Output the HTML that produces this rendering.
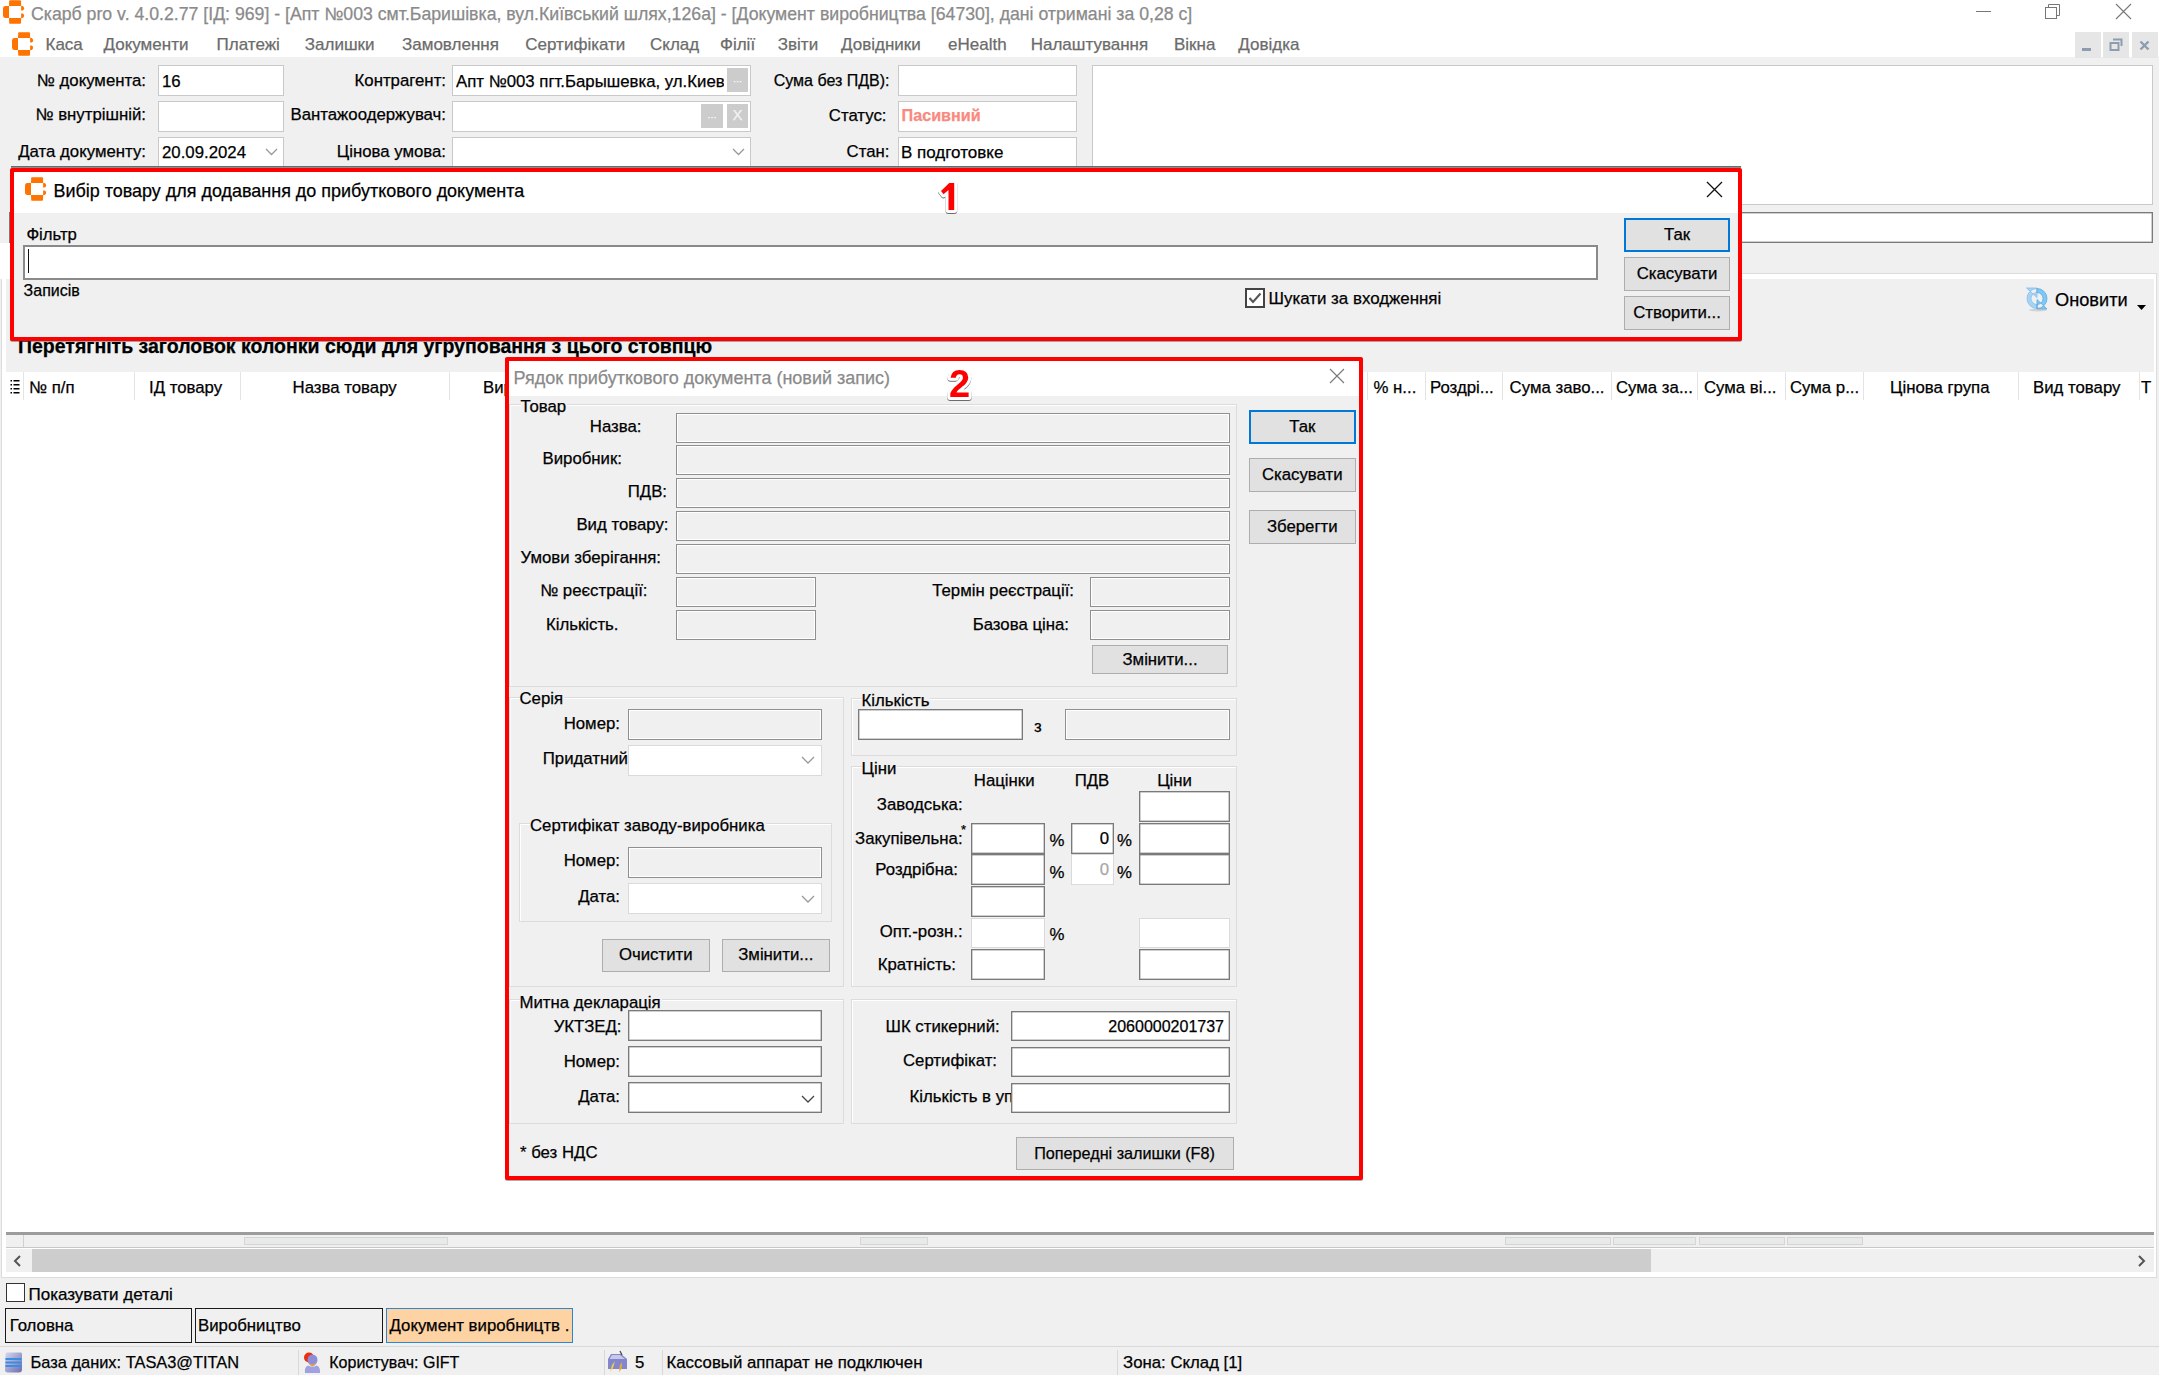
<!DOCTYPE html><html><head><meta charset="utf-8"><style>
*{margin:0;padding:0}
html,body{width:2159px;height:1375px;overflow:hidden;background:#f0f0f0;font-family:"Liberation Sans",sans-serif;color:#000}
.t{position:absolute;white-space:nowrap;line-height:1;-webkit-text-stroke:0.25px currentColor}
.b{position:absolute}
.ab{position:absolute;overflow:visible}
</style></head><body>
<div class="b" style="left:0px;top:0px;width:2159px;height:28px;background:#fff;"></div>
<svg class="ab" style="left:3.3px;top:-0.3px" width="21.0" height="24.0" viewBox="0 0 21 24"><g fill="#ff7300"><path d="M6.8 0.3 H17.2 Q17.9 0.3 18 1.2 L18.2 5.9 H6 L6.2 1.2 Q6.3 0.3 6.8 0.3 Z"/><path d="M6 6 V17.9 H2 Q0 17.8 0 15.5 V8.4 Q0 6.1 2 6 Z"/><path d="M6 18 H18.2 L18 22.8 Q17.9 23.8 17.2 23.8 H6.8 Q6.3 23.8 6.2 22.8 Z"/><path d="M18.1 6 H19.5 Q21.1 6.2 21.1 8.2 Q21.1 10.4 19.3 10.5 H18.1 Z"/><path d="M18.1 13.5 H19.3 Q21.1 13.6 21.1 15.8 Q21.1 17.8 19.5 17.9 H18.1 Z"/></g></svg>
<div class="t" style="top:6.0px;font-size:17.7px;left:31px;color:#8a8a8a;">Скарб pro v. 4.0.2.77 [ІД: 969] - [Апт №003 смт.Баришівка, вул.Київський шлях,126а] - [Документ виробництва [64730], дані отримані за 0,28 с]</div>
<div class="b" style="left:1976px;top:11px;width:15px;height:1px;background:#777;"></div>
<svg class="ab" style="left:2044px;top:3px" width="18" height="18"><rect x="1.5" y="4.5" width="11" height="11" fill="none" stroke="#777" stroke-width="1"/><path d="M4.5 4.5 V1.5 H15.5 V12.5 H12.5" fill="none" stroke="#777" stroke-width="1"/></svg>
<svg class="ab" style="left:2115px;top:3px" width="18" height="18"><path d="M1 1 L16 16 M16 1 L1 16" stroke="#777" stroke-width="1.1"/></svg>
<div class="b" style="left:0px;top:28px;width:2159px;height:29px;background:#fff;"></div>
<svg class="ab" style="left:12px;top:31.5px" width="21.0" height="24.0" viewBox="0 0 21 24"><g fill="#ff7300"><path d="M6.8 0.3 H17.2 Q17.9 0.3 18 1.2 L18.2 5.9 H6 L6.2 1.2 Q6.3 0.3 6.8 0.3 Z"/><path d="M6 6 V17.9 H2 Q0 17.8 0 15.5 V8.4 Q0 6.1 2 6 Z"/><path d="M6 18 H18.2 L18 22.8 Q17.9 23.8 17.2 23.8 H6.8 Q6.3 23.8 6.2 22.8 Z"/><path d="M18.1 6 H19.5 Q21.1 6.2 21.1 8.2 Q21.1 10.4 19.3 10.5 H18.1 Z"/><path d="M18.1 13.5 H19.3 Q21.1 13.6 21.1 15.8 Q21.1 17.8 19.5 17.9 H18.1 Z"/></g></svg>
<div class="t" style="top:36.0px;font-size:17.0px;left:45.5px;color:#6b6b6b;">Каса</div>
<div class="t" style="top:36.0px;font-size:17.0px;left:103.5px;color:#6b6b6b;">Документи</div>
<div class="t" style="top:36.0px;font-size:17.0px;left:216.6px;color:#6b6b6b;">Платежі</div>
<div class="t" style="top:36.0px;font-size:17.0px;left:304.8px;color:#6b6b6b;">Залишки</div>
<div class="t" style="top:36.0px;font-size:17.0px;left:402px;color:#6b6b6b;">Замовлення</div>
<div class="t" style="top:36.0px;font-size:17.0px;left:525.3px;color:#6b6b6b;">Сертифікати</div>
<div class="t" style="top:36.0px;font-size:17.0px;left:650px;color:#6b6b6b;">Склад</div>
<div class="t" style="top:36.0px;font-size:17.0px;left:720px;color:#6b6b6b;">Філії</div>
<div class="t" style="top:36.0px;font-size:17.0px;left:777.8px;color:#6b6b6b;">Звіти</div>
<div class="t" style="top:36.0px;font-size:17.0px;left:841px;color:#6b6b6b;">Довідники</div>
<div class="t" style="top:36.0px;font-size:17.0px;left:948px;color:#6b6b6b;">eHealth</div>
<div class="t" style="top:36.0px;font-size:17.0px;left:1030.7px;color:#6b6b6b;">Налаштування</div>
<div class="t" style="top:36.0px;font-size:17.0px;left:1174px;color:#6b6b6b;">Вікна</div>
<div class="t" style="top:36.0px;font-size:17.0px;left:1238.3px;color:#6b6b6b;">Довідка</div>
<div class="b" style="left:2075px;top:32px;width:26px;height:26px;background:#e6e6e6;"></div>
<div class="b" style="left:2103px;top:32px;width:26px;height:26px;background:#e6e6e6;"></div>
<div class="b" style="left:2132px;top:32px;width:26px;height:26px;background:#e6e6e6;"></div>
<div class="b" style="left:2082px;top:48px;width:9px;height:3px;background:#8c9db0;"></div>
<svg class="ab" style="left:2109px;top:38px" width="14" height="14"><path d="M4 1.5 H12.5 V8" fill="none" stroke="#8c9db0" stroke-width="2"/><rect x="1.5" y="5" width="8" height="7" fill="none" stroke="#8c9db0" stroke-width="2"/></svg>
<svg class="ab" style="left:2139px;top:40px" width="12" height="12"><path d="M1.5 1.5 L9.5 9.5 M9.5 1.5 L1.5 9.5" stroke="#8c9db0" stroke-width="2.4"/></svg>
<div class="t" style="top:73.0px;font-size:16.8px;right:2013px;">№ документа:</div>
<div class="t" style="top:107.0px;font-size:16.8px;right:2013px;">№ внутрішній:</div>
<div class="t" style="top:144.0px;font-size:16.8px;right:2013px;">Дата документу:</div>
<div class="b" style="left:158px;top:65px;width:126px;height:31px;background:#fff;border:1px solid #c9c9c9;box-sizing:border-box;"></div>
<div class="t" style="top:74.0px;font-size:16.8px;left:162px;">16</div>
<div class="b" style="left:158px;top:101px;width:126px;height:31px;background:#fff;border:1px solid #c9c9c9;box-sizing:border-box;"></div>
<div class="b" style="left:158px;top:137px;width:126px;height:31px;background:#fff;border:1px solid #c9c9c9;box-sizing:border-box;"></div>
<div class="t" style="top:145.0px;font-size:16.8px;left:162px;">20.09.2024</div>
<svg class="ab" style="left:264.5px;top:148.25px" width="13" height="7.5"><path d="M1 1 L6.5 6.5 L12 1" fill="none" stroke="#999" stroke-width="1.3"/></svg>
<div class="t" style="top:73.0px;font-size:16.8px;right:1713px;">Контрагент:</div>
<div class="t" style="top:107.0px;font-size:16.8px;right:1713px;">Вантажоодержувач:</div>
<div class="t" style="top:144.0px;font-size:16.8px;right:1713px;">Цінова умова:</div>
<div class="b" style="left:452px;top:65px;width:299px;height:31px;background:#fff;border:1px solid #c9c9c9;box-sizing:border-box;"></div>
<div class="t" style="top:74.0px;font-size:16.8px;left:456px;width:268px;overflow:hidden;">Апт №003 пгт.Барышевка, ул.Киев</div>
<div class="b" style="left:727px;top:68px;width:21px;height:24px;background:#cccccc;"></div>
<div class="t" style="top:77.0px;font-size:9px;left:737.5px;transform:translateX(-50%);color:#fff;">···</div>
<div class="b" style="left:452px;top:101px;width:299px;height:31px;background:#fff;border:1px solid #c9c9c9;box-sizing:border-box;"></div>
<div class="b" style="left:701px;top:104px;width:22px;height:24px;background:#cccccc;"></div>
<div class="t" style="top:113.0px;font-size:9px;left:712px;transform:translateX(-50%);color:#fff;">···</div>
<div class="b" style="left:727px;top:104px;width:21px;height:24px;background:#cccccc;"></div>
<div class="t" style="top:107.0px;font-size:15px;left:737.5px;transform:translateX(-50%);color:#f4f4f4;">X</div>
<div class="b" style="left:452px;top:137px;width:299px;height:31px;background:#fff;border:1px solid #c9c9c9;box-sizing:border-box;"></div>
<svg class="ab" style="left:731.5px;top:148.25px" width="13" height="7.5"><path d="M1 1 L6.5 6.5 L12 1" fill="none" stroke="#999" stroke-width="1.3"/></svg>
<div class="t" style="top:73.0px;font-size:16.0px;right:1269.5px;">Сума без ПДВ):</div>
<div class="t" style="top:108.0px;font-size:16.8px;right:1272.5px;">Статус:</div>
<div class="t" style="top:144.0px;font-size:16.8px;right:1269.5px;">Стан:</div>
<div class="b" style="left:898px;top:65px;width:179px;height:31px;background:#fff;border:1px solid #c9c9c9;box-sizing:border-box;"></div>
<div class="b" style="left:898px;top:101px;width:179px;height:31px;background:#fff;border:1px solid #c9c9c9;box-sizing:border-box;"></div>
<div class="t" style="top:107.0px;font-size:16.2px;left:901.5px;color:#f88a80;font-weight:bold;">Пасивний</div>
<div class="b" style="left:898px;top:137px;width:179px;height:31px;background:#fff;border:1px solid #c9c9c9;box-sizing:border-box;"></div>
<div class="t" style="top:144.0px;font-size:17px;left:901px;">В подготовке</div>
<div class="b" style="left:1092px;top:65px;width:1061px;height:140px;background:#fff;border:1px solid #c9c9c9;box-sizing:border-box;"></div>
<div class="b" style="left:9px;top:212px;width:2144px;height:31px;background:#fff;border:1px solid #7a7a7a;box-sizing:border-box;box-shadow:inset 0 0 0 0.5px #a0a0a0;"></div>
<div class="b" style="left:1px;top:273px;width:2156px;height:1005px;background:#fff;border:1px solid #dcdcdc;box-sizing:border-box;"></div>
<div class="b" style="left:0px;top:243px;width:10px;height:36px;background:#fff;"></div>
<div class="b" style="left:6px;top:279px;width:2148px;height:93px;background:#f0f0f0;"></div>
<svg class="ab" style="left:2020px;top:282px" width="34" height="34" viewBox="0 0 34 34"><ellipse cx="18" cy="28" rx="9" ry="1.5" fill="rgba(0,0,0,0.12)"/><path d="M17 6.5 A10 10 0 0 0 17 26.5 V22.5 A6 6 0 0 1 17 10.5 Z M6.5 6 H17 V15.5 Z" fill="#a6d4f6" stroke="#86bdea" stroke-width="0.8"/><path d="M17 6.5 A10 10 0 0 1 17 26.5 V22.5 A6 6 0 0 0 17 10.5 Z M17 17.5 V27 H27 Z" fill="#7cc8f6" stroke="#5fa8e0" stroke-width="0.8"/></svg>
<div class="t" style="top:291.0px;font-size:18.2px;left:2055px;">Оновити</div>
<svg class="ab" style="left:2137px;top:305px" width="10" height="6"><path d="M0 0 H9 L4.5 5 Z" fill="#000"/></svg>
<div class="t" style="top:337.0px;font-size:19.5px;left:18px;font-weight:bold;">Перетягніть заголовок колонки сюди для угруповання з цього стовпцю</div>
<div class="b" style="left:6px;top:372px;width:2148px;height:28px;background:#fff;"></div>
<svg class="ab" style="left:10px;top:379px" width="10" height="15"><g fill="#000"><rect x="0.5" y="1" width="1.5" height="1.5"/><rect x="3.5" y="1" width="6" height="1.5"/><rect x="0.5" y="5" width="1.5" height="1.5"/><rect x="3.5" y="5" width="6" height="1.5"/><rect x="0.5" y="9" width="1.5" height="1.5"/><rect x="3.5" y="9" width="6" height="1.5"/><rect x="0.5" y="13" width="1.5" height="1.5"/><rect x="3.5" y="13" width="6" height="1.5"/></g></svg>
<div class="b" style="left:23px;top:372px;width:1px;height:28px;background:#e4e4e4;"></div>
<div class="b" style="left:134px;top:372px;width:1px;height:28px;background:#e4e4e4;"></div>
<div class="b" style="left:240px;top:372px;width:1px;height:28px;background:#e4e4e4;"></div>
<div class="b" style="left:448.5px;top:372px;width:1.0px;height:28px;background:#e4e4e4;"></div>
<div class="b" style="left:1367.4px;top:372px;width:1.0px;height:28px;background:#e4e4e4;"></div>
<div class="b" style="left:1425px;top:372px;width:1px;height:28px;background:#e4e4e4;"></div>
<div class="b" style="left:1501.7px;top:372px;width:1.0px;height:28px;background:#e4e4e4;"></div>
<div class="b" style="left:1611px;top:372px;width:1px;height:28px;background:#e4e4e4;"></div>
<div class="b" style="left:1696.7px;top:372px;width:1.0px;height:28px;background:#e4e4e4;"></div>
<div class="b" style="left:1784.7px;top:372px;width:1.0px;height:28px;background:#e4e4e4;"></div>
<div class="b" style="left:1863px;top:372px;width:1px;height:28px;background:#e4e4e4;"></div>
<div class="b" style="left:2018px;top:372px;width:1px;height:28px;background:#e4e4e4;"></div>
<div class="b" style="left:2139.4px;top:372px;width:1.0px;height:28px;background:#e4e4e4;"></div>
<div class="t" style="top:380.0px;font-size:16.8px;left:29px;">№ п/п</div>
<div class="t" style="top:380.0px;font-size:16.8px;left:149px;">ІД товару</div>
<div class="t" style="top:380.0px;font-size:16.8px;left:292.6px;">Назва товару</div>
<div class="t" style="top:380.0px;font-size:16.8px;left:483px;">Вир</div>
<div class="t" style="top:380.0px;font-size:16.8px;left:1373.5px;">% н...</div>
<div class="t" style="top:380.0px;font-size:16.8px;left:1430px;">Роздрі...</div>
<div class="t" style="top:380.0px;font-size:16.8px;left:1509.6px;">Сума заво...</div>
<div class="t" style="top:380.0px;font-size:16.8px;left:1616px;">Сума за...</div>
<div class="t" style="top:380.0px;font-size:16.8px;left:1704px;">Сума ві...</div>
<div class="t" style="top:380.0px;font-size:16.8px;left:1790px;">Сума р...</div>
<div class="t" style="top:380.0px;font-size:16.8px;left:1890px;">Цінова група</div>
<div class="t" style="top:380.0px;font-size:16.8px;left:2033px;">Вид товару</div>
<div class="t" style="top:380.0px;font-size:16.8px;left:2141px;">Т</div>
<div class="b" style="left:6px;top:1232px;width:2148px;height:3px;background:#9c9c9c;"></div>
<div class="b" style="left:6px;top:1235px;width:2148px;height:12px;background:#f0f0f0;"></div>
<div class="b" style="left:6px;top:1247px;width:2148px;height:1px;background:#c8c8c8;"></div>
<div class="b" style="left:23px;top:1235px;width:1px;height:12px;background:#d0d0d0;"></div>
<div class="b" style="left:244px;top:1237px;width:204px;height:8px;background:#e8eaea;border:1px solid #d4d6d6;box-sizing:border-box;"></div>
<div class="b" style="left:860px;top:1237px;width:68px;height:8px;background:#e8eaea;border:1px solid #d4d6d6;box-sizing:border-box;"></div>
<div class="b" style="left:1505px;top:1237px;width:106px;height:8px;background:#e8eaea;border:1px solid #d4d6d6;box-sizing:border-box;"></div>
<div class="b" style="left:1613px;top:1237px;width:83px;height:8px;background:#e8eaea;border:1px solid #d4d6d6;box-sizing:border-box;"></div>
<div class="b" style="left:1699px;top:1237px;width:86px;height:8px;background:#e8eaea;border:1px solid #d4d6d6;box-sizing:border-box;"></div>
<div class="b" style="left:1787px;top:1237px;width:76px;height:8px;background:#e8eaea;border:1px solid #d4d6d6;box-sizing:border-box;"></div>
<div class="b" style="left:6px;top:1249px;width:2148px;height:23px;background:#f0f0f0;"></div>
<div class="b" style="left:32px;top:1249px;width:1619px;height:23px;background:#cdcdcd;"></div>
<svg class="ab" style="left:13px;top:1255px" width="10" height="12"><path d="M7 1 L2 6 L7 11" fill="none" stroke="#555" stroke-width="2"/></svg>
<svg class="ab" style="left:2136px;top:1255px" width="10" height="12"><path d="M3 1 L8 6 L3 11" fill="none" stroke="#555" stroke-width="2"/></svg>
<div class="b" style="left:6px;top:1283px;width:19px;height:19px;background:#fff;border:1px solid #333;box-sizing:border-box;"></div>
<div class="t" style="top:1286.0px;font-size:17px;left:28.5px;">Показувати деталі</div>
<div class="b" style="left:5px;top:1308px;width:187px;height:35px;border:1.5px solid #1a1a1a;box-sizing:border-box;"></div>
<div class="t" style="top:1318.0px;font-size:16.8px;left:9.7px;">Головна</div>
<div class="b" style="left:195px;top:1308px;width:188px;height:35px;border:1.5px solid #1a1a1a;box-sizing:border-box;"></div>
<div class="t" style="top:1318.0px;font-size:16.8px;left:198px;">Виробництво</div>
<div class="b" style="left:386px;top:1308px;width:187px;height:35px;background:#fed3a3;border:1.5px solid #2a86d8;box-sizing:border-box;"></div>
<div class="t" style="top:1318.0px;font-size:16.8px;left:389.5px;">Документ виробництв .</div>
<div class="b" style="left:0px;top:1346px;width:2159px;height:1px;background:#d8d8d8;"></div>
<div class="b" style="left:297.5px;top:1350px;width:1.0px;height:25px;background:#d8d8d8;"></div>
<div class="b" style="left:604px;top:1350px;width:1px;height:25px;background:#d8d8d8;"></div>
<div class="b" style="left:661.7px;top:1350px;width:1.0px;height:25px;background:#d8d8d8;"></div>
<div class="b" style="left:1117px;top:1350px;width:1px;height:25px;background:#d8d8d8;"></div>
<div class="t" style="top:1354.0px;font-size:16.4px;left:30.6px;">База даних: TASA3@TITAN</div>
<div class="t" style="top:1355.0px;font-size:16.0px;left:329.3px;">Користувач: GIFT</div>
<div class="t" style="top:1355.0px;font-size:16.8px;left:635px;">5</div>
<div class="t" style="top:1355.0px;font-size:16.8px;left:666.5px;">Кассовый аппарат не подключен</div>
<div class="t" style="top:1355.0px;font-size:16.8px;left:1123px;">Зона: Склад [1]</div>
<svg class="ab" style="left:4px;top:1352px" width="19" height="21" viewBox="0 0 19 21"><defs><linearGradient id="dbg" x1="0" y1="0" x2="1" y2="1"><stop offset="0" stop-color="#d8d8f0"/><stop offset="1" stop-color="#6c6cb0"/></linearGradient></defs><path d="M1.5 2 Q1.5 0.5 3 0.5 H17 Q18 0.5 18 2 V17.5 Q18 20.5 15 20.5 H4 Q1 20.5 1 18 Z" fill="url(#dbg)"/><rect x="1.5" y="6" width="16" height="2" fill="#3a8ee0"/><rect x="1.5" y="9.5" width="16" height="2" fill="#3a8ee0"/><rect x="1.5" y="13" width="16" height="2" fill="#3a8ee0"/></svg>
<svg class="ab" style="left:303px;top:1351px" width="18" height="23" viewBox="0 0 18 23"><circle cx="6" cy="6.5" r="5" fill="#e83010"/><ellipse cx="9.5" cy="9" rx="5" ry="5.5" fill="#8c8ed8"/><path d="M6 11.5 Q9.5 15 13 11.5 Q12 15 9.5 15.5 Q7 15 6 11.5 Z" fill="#e89a50"/><path d="M2 22 Q1 15.5 5.5 14.5 Q9.5 17 13.5 14.5 Q17.5 15.5 17 22 Z" fill="#a0a2e0"/></svg>
<svg class="ab" style="left:607px;top:1350px" width="21" height="23" viewBox="0 0 21 23"><path d="M1 9 L4 4 H14 L20 9 V19 H1 Z" fill="#8486cc"/><path d="M3 8 L5 5 H13 L18 9 H3 Z" fill="#c8c8ec"/><path d="M13 1 L15 5" stroke="#444" stroke-width="1.2"/><path d="M3 22 L5 15 L8 11 L6 18 Z" fill="#f0d040"/><path d="M12 22 L13 15 L15 12 L14.5 19 Z" fill="#e8b030"/></svg>
<div class="b" style="left:11px;top:166px;width:1730px;height:2px;background:linear-gradient(#555c5c,#9aa0a0);"></div>
<div class="b" style="left:10px;top:168px;width:1732px;height:173px;background:#f0f0f0;border:4px solid #ff0000;box-sizing:border-box;border-radius:2px;box-shadow:0 0.8px 0 rgba(40,60,60,0.55);"></div>
<div class="b" style="left:14px;top:172px;width:1724px;height:41px;background:#fff;"></div>
<svg class="ab" style="left:25px;top:177px" width="21.0" height="24.0" viewBox="0 0 21 24"><g fill="#ff7300"><path d="M6.8 0.3 H17.2 Q17.9 0.3 18 1.2 L18.2 5.9 H6 L6.2 1.2 Q6.3 0.3 6.8 0.3 Z"/><path d="M6 6 V17.9 H2 Q0 17.8 0 15.5 V8.4 Q0 6.1 2 6 Z"/><path d="M6 18 H18.2 L18 22.8 Q17.9 23.8 17.2 23.8 H6.8 Q6.3 23.8 6.2 22.8 Z"/><path d="M18.1 6 H19.5 Q21.1 6.2 21.1 8.2 Q21.1 10.4 19.3 10.5 H18.1 Z"/><path d="M18.1 13.5 H19.3 Q21.1 13.6 21.1 15.8 Q21.1 17.8 19.5 17.9 H18.1 Z"/></g></svg>
<div class="t" style="top:183.0px;font-size:17.97px;left:53.5px;">Вибір товару для додавання до прибуткового документа</div>
<svg class="ab" style="left:1706px;top:181px" width="18" height="18"><path d="M1 1 L16 16 M16 1 L1 16" stroke="#111" stroke-width="1.3"/></svg>
<div class="t" style="top:227.0px;font-size:16.7px;left:26.4px;">Фільтр</div>
<div class="b" style="left:23px;top:245px;width:1575px;height:35px;background:#fff;border:2px solid #8a8a8a;box-sizing:border-box;"></div>
<div class="b" style="left:27.5px;top:249px;width:1.5px;height:24px;background:#111;"></div>
<div class="t" style="top:283.0px;font-size:16.0px;left:23.6px;">Записів</div>
<div class="b" style="left:1245px;top:288px;width:20px;height:20px;background:#fff;border:2px solid #444;box-sizing:border-box;"></div>
<svg class="ab" style="left:1247px;top:290px" width="16" height="16"><path d="M2.5 8 L6 12 L13.5 3.5" fill="none" stroke="#555" stroke-width="2"/></svg>
<div class="t" style="top:291.0px;font-size:16.9px;left:1268.5px;">Шукати за входженняі</div>
<div class="b" style="left:1624px;top:218px;width:106px;height:34px;background:#e1e1e1;border:2px solid #0078d7;box-sizing:border-box;"></div>
<div class="t" style="top:227.0px;font-size:16.8px;left:1677.0px;transform:translateX(-50%);">Так</div>
<div class="b" style="left:1624px;top:257px;width:106px;height:34px;background:#e1e1e1;border:1px solid #adadad;box-sizing:border-box;"></div>
<div class="t" style="top:266.0px;font-size:16.8px;left:1677.0px;transform:translateX(-50%);">Скасувати</div>
<div class="b" style="left:1624px;top:296px;width:106px;height:34px;background:#e1e1e1;border:1px solid #adadad;box-sizing:border-box;"></div>
<div class="t" style="top:305.0px;font-size:16.8px;left:1677.0px;transform:translateX(-50%);">Створити...</div>
<div class="b" style="left:505px;top:357px;width:858px;height:823px;background:#f0f0f0;border:4px solid #ff0000;box-sizing:border-box;border-radius:2px;box-shadow:0 0.8px 0 rgba(40,60,60,0.55);"></div>
<div class="b" style="left:509px;top:361px;width:850px;height:35px;background:#fff;"></div>
<div class="t" style="top:369.0px;font-size:18.0px;left:513.5px;color:#8a8a8a;">Рядок прибуткового документа (новий запис)</div>
<svg class="ab" style="left:1329px;top:368px" width="17" height="17"><path d="M1 1 L15 15 M15 1 L1 15" stroke="#777" stroke-width="1.1"/></svg>
<div class="b" style="left:509px;top:404px;width:728px;height:283px;border:1px solid #dcdcdc;box-sizing:border-box;box-shadow:inset 1px 1px 0 #fff;"></div>
<div class="t" style="top:399.0px;font-size:16.8px;left:520.5px;background:#f0f0f0;padding-right:1px;">Товар</div>
<div class="t" style="top:419.0px;font-size:16.8px;right:1517.5px;">Назва:</div>
<div class="t" style="top:451.0px;font-size:16.8px;right:1537px;">Виробник:</div>
<div class="t" style="top:484.0px;font-size:16.8px;right:1492px;">ПДВ:</div>
<div class="t" style="top:517.0px;font-size:16.8px;right:1490.5px;">Вид товару:</div>
<div class="t" style="top:550.0px;font-size:16.8px;right:1498px;">Умови зберігання:</div>
<div class="t" style="top:583.0px;font-size:16.8px;right:1511.5px;">№ реєстрації:</div>
<div class="t" style="top:617.0px;font-size:16.8px;right:1540.5px;">Кількість.</div>
<div class="b" style="left:676px;top:413px;width:553.5px;height:30px;background:#f0f0f0;border:1px solid #8f8f8f;box-sizing:border-box;box-shadow:inset 0 0 0 1px #fff;"></div>
<div class="b" style="left:676px;top:445px;width:553.5px;height:30px;background:#f0f0f0;border:1px solid #8f8f8f;box-sizing:border-box;box-shadow:inset 0 0 0 1px #fff;"></div>
<div class="b" style="left:676px;top:478px;width:553.5px;height:30px;background:#f0f0f0;border:1px solid #8f8f8f;box-sizing:border-box;box-shadow:inset 0 0 0 1px #fff;"></div>
<div class="b" style="left:676px;top:511px;width:553.5px;height:30px;background:#f0f0f0;border:1px solid #8f8f8f;box-sizing:border-box;box-shadow:inset 0 0 0 1px #fff;"></div>
<div class="b" style="left:676px;top:544px;width:553.5px;height:30px;background:#f0f0f0;border:1px solid #8f8f8f;box-sizing:border-box;box-shadow:inset 0 0 0 1px #fff;"></div>
<div class="b" style="left:676px;top:577px;width:139.5px;height:30px;background:#f0f0f0;border:1px solid #8f8f8f;box-sizing:border-box;box-shadow:inset 0 0 0 1px #fff;"></div>
<div class="b" style="left:676px;top:610px;width:139.5px;height:30px;background:#f0f0f0;border:1px solid #8f8f8f;box-sizing:border-box;box-shadow:inset 0 0 0 1px #fff;"></div>
<div class="t" style="top:583.0px;font-size:16.8px;right:1085px;">Термін реєстрації:</div>
<div class="t" style="top:617.0px;font-size:16.8px;right:1090px;">Базова ціна:</div>
<div class="b" style="left:1090px;top:577px;width:139.5px;height:30px;background:#f0f0f0;border:1px solid #8f8f8f;box-sizing:border-box;box-shadow:inset 0 0 0 1px #fff;"></div>
<div class="b" style="left:1090px;top:610px;width:139.5px;height:30px;background:#f0f0f0;border:1px solid #8f8f8f;box-sizing:border-box;box-shadow:inset 0 0 0 1px #fff;"></div>
<div class="b" style="left:1092px;top:645px;width:136px;height:29px;background:#e1e1e1;border:1px solid #adadad;box-sizing:border-box;"></div>
<div class="t" style="top:652.0px;font-size:16.8px;left:1160.0px;transform:translateX(-50%);">Змінити...</div>
<div class="b" style="left:1249px;top:410px;width:106.5px;height:34px;background:#e1e1e1;border:2px solid #0078d7;box-sizing:border-box;"></div>
<div class="t" style="top:419.0px;font-size:16.8px;left:1302.25px;transform:translateX(-50%);">Так</div>
<div class="b" style="left:1249px;top:458px;width:106.5px;height:34px;background:#e1e1e1;border:1px solid #adadad;box-sizing:border-box;"></div>
<div class="t" style="top:467.0px;font-size:16.8px;left:1302.25px;transform:translateX(-50%);">Скасувати</div>
<div class="b" style="left:1249px;top:510px;width:106.5px;height:34px;background:#e1e1e1;border:1px solid #adadad;box-sizing:border-box;"></div>
<div class="t" style="top:519.0px;font-size:16.8px;left:1302.25px;transform:translateX(-50%);">Зберегти</div>
<div class="b" style="left:509px;top:697px;width:335px;height:290px;border:1px solid #dcdcdc;box-sizing:border-box;box-shadow:inset 1px 1px 0 #fff;"></div>
<div class="t" style="top:691.0px;font-size:16.8px;left:519.5px;background:#f0f0f0;padding-right:1px;">Серія</div>
<div class="t" style="top:716.0px;font-size:16.8px;right:1539px;">Номер:</div>
<div class="b" style="left:628px;top:708.5px;width:193.5px;height:31.0px;background:#f0f0f0;border:1px solid #8f8f8f;box-sizing:border-box;box-shadow:inset 0 0 0 1px #fff;"></div>
<div class="t" style="top:751.0px;font-size:16.8px;right:1531px;">Придатний</div>
<div class="b" style="left:628px;top:744.5px;width:193.5px;height:31.0px;background:#fff;border:1px solid #dadada;box-sizing:border-box;"></div>
<svg class="ab" style="left:800.5px;top:756.0px" width="14" height="8.0"><path d="M1 1 L7.0 7.0 L13 1" fill="none" stroke="#999" stroke-width="1.3"/></svg>
<div class="b" style="left:519px;top:823px;width:312.5px;height:99px;border:1px solid #dcdcdc;box-sizing:border-box;box-shadow:inset 1px 1px 0 #fff;"></div>
<div class="t" style="top:818.0px;font-size:16.8px;left:530px;background:#f0f0f0;padding-right:1px;">Сертифікат заводу-виробника</div>
<div class="t" style="top:853.0px;font-size:16.8px;right:1539px;">Номер:</div>
<div class="b" style="left:628px;top:847px;width:193.5px;height:30.5px;background:#f0f0f0;border:1px solid #8f8f8f;box-sizing:border-box;box-shadow:inset 0 0 0 1px #fff;"></div>
<div class="t" style="top:889.0px;font-size:16.8px;right:1539px;">Дата:</div>
<div class="b" style="left:628px;top:883px;width:193.5px;height:30.5px;background:#fff;border:1px solid #dadada;box-sizing:border-box;"></div>
<svg class="ab" style="left:800.5px;top:894.5px" width="14" height="8.0"><path d="M1 1 L7.0 7.0 L13 1" fill="none" stroke="#999" stroke-width="1.3"/></svg>
<div class="b" style="left:601.5px;top:938.5px;width:108.5px;height:33.0px;background:#e1e1e1;border:1px solid #adadad;box-sizing:border-box;"></div>
<div class="t" style="top:947.0px;font-size:16.8px;left:655.75px;transform:translateX(-50%);">Очистити</div>
<div class="b" style="left:721.5px;top:938.5px;width:108.5px;height:33.0px;background:#e1e1e1;border:1px solid #adadad;box-sizing:border-box;"></div>
<div class="t" style="top:947.0px;font-size:16.8px;left:775.75px;transform:translateX(-50%);">Змінити...</div>
<div class="b" style="left:850.5px;top:697.5px;width:386.5px;height:58.0px;border:1px solid #dcdcdc;box-sizing:border-box;box-shadow:inset 1px 1px 0 #fff;"></div>
<div class="t" style="top:693.0px;font-size:16.8px;left:861.5px;background:#f0f0f0;padding-right:1px;">Кількість</div>
<div class="b" style="left:858px;top:708.5px;width:164.5px;height:31.0px;background:#fff;border:1px solid #7a7a7a;box-sizing:border-box;box-shadow:inset 0 0 0 0.5px #a0a0a0;"></div>
<div class="t" style="top:719.0px;font-size:16.8px;left:1034px;">з</div>
<div class="b" style="left:1065px;top:708.5px;width:164.5px;height:31.0px;background:#f0f0f0;border:1px solid #8f8f8f;box-sizing:border-box;box-shadow:inset 0 0 0 1px #fff;"></div>
<div class="b" style="left:850.5px;top:766px;width:386.5px;height:220.5px;border:1px solid #dcdcdc;box-sizing:border-box;box-shadow:inset 1px 1px 0 #fff;"></div>
<div class="t" style="top:761.0px;font-size:16.8px;left:861.5px;background:#f0f0f0;padding-right:1px;">Ціни</div>
<div class="t" style="top:773.0px;font-size:16.8px;left:973.8px;">Націнки</div>
<div class="t" style="top:773.0px;font-size:16.8px;left:1074.7px;">ПДВ</div>
<div class="t" style="top:773.0px;font-size:16.8px;left:1157.2px;">Ціни</div>
<div class="t" style="top:797.0px;font-size:16.8px;right:1196.4px;">Заводська:</div>
<div class="t" style="top:831.0px;font-size:16.8px;right:1196.4px;">Закупівельна:</div>
<div class="t" style="top:823.0px;font-size:13px;left:961px;">*</div>
<div class="t" style="top:862.0px;font-size:16.8px;right:1201px;">Роздрібна:</div>
<div class="t" style="top:924.0px;font-size:16.8px;right:1196.4px;">Опт.-розн.:</div>
<div class="t" style="top:957.0px;font-size:16.8px;right:1203px;">Кратність:</div>
<div class="b" style="left:1138.5px;top:791px;width:91.0px;height:31px;background:#fff;border:1px solid #7a7a7a;box-sizing:border-box;box-shadow:inset 0 0 0 0.5px #a0a0a0;"></div>
<div class="b" style="left:970.5px;top:822.5px;width:74.0px;height:31.0px;background:#fff;border:1px solid #7a7a7a;box-sizing:border-box;box-shadow:inset 0 0 0 0.5px #a0a0a0;"></div>
<div class="b" style="left:1070.5px;top:822.5px;width:43.5px;height:31.0px;background:#fff;border:1px solid #7a7a7a;box-sizing:border-box;box-shadow:inset 0 0 0 0.5px #a0a0a0;"></div>
<div class="b" style="left:1138.5px;top:822.5px;width:91.0px;height:31.0px;background:#fff;border:1px solid #7a7a7a;box-sizing:border-box;box-shadow:inset 0 0 0 0.5px #a0a0a0;"></div>
<div class="t" style="top:831.0px;font-size:16.8px;right:1050px;">0</div>
<div class="b" style="left:970.5px;top:854px;width:74.0px;height:31px;background:#fff;border:1px solid #7a7a7a;box-sizing:border-box;box-shadow:inset 0 0 0 0.5px #a0a0a0;"></div>
<div class="b" style="left:1070.5px;top:854px;width:43.5px;height:31px;background:#fff;border:1px solid #dadada;box-sizing:border-box;"></div>
<div class="b" style="left:1138.5px;top:854px;width:91.0px;height:31px;background:#fff;border:1px solid #7a7a7a;box-sizing:border-box;box-shadow:inset 0 0 0 0.5px #a0a0a0;"></div>
<div class="t" style="top:862.0px;font-size:16.8px;right:1050px;color:#a8a8a8;">0</div>
<div class="b" style="left:970.5px;top:885.5px;width:74.0px;height:31.5px;background:#fff;border:1px solid #7a7a7a;box-sizing:border-box;box-shadow:inset 0 0 0 0.5px #a0a0a0;"></div>
<div class="b" style="left:970.5px;top:917.5px;width:74.0px;height:30.5px;background:#fff;border:1px solid #dadada;box-sizing:border-box;"></div>
<div class="b" style="left:1138.5px;top:917.5px;width:91.0px;height:30.5px;background:#fff;border:1px solid #dadada;box-sizing:border-box;"></div>
<div class="b" style="left:970.5px;top:949px;width:74.0px;height:31px;background:#fff;border:1px solid #7a7a7a;box-sizing:border-box;box-shadow:inset 0 0 0 0.5px #a0a0a0;"></div>
<div class="b" style="left:1138.5px;top:949px;width:91.0px;height:31px;background:#fff;border:1px solid #7a7a7a;box-sizing:border-box;box-shadow:inset 0 0 0 0.5px #a0a0a0;"></div>
<div class="t" style="top:833.0px;font-size:16.8px;left:1049.5px;">%</div>
<div class="t" style="top:865.0px;font-size:16.8px;left:1049.5px;">%</div>
<div class="t" style="top:927.0px;font-size:16.8px;left:1049.5px;">%</div>
<div class="t" style="top:833.0px;font-size:16.8px;left:1117px;">%</div>
<div class="t" style="top:865.0px;font-size:16.8px;left:1117px;">%</div>
<div class="b" style="left:509px;top:998.5px;width:335px;height:125.0px;border:1px solid #dcdcdc;box-sizing:border-box;box-shadow:inset 1px 1px 0 #fff;"></div>
<div class="t" style="top:995.0px;font-size:16.8px;left:519.5px;background:#f0f0f0;padding-right:1px;">Митна декларація</div>
<div class="t" style="top:1019.0px;font-size:16.8px;right:1537.5px;">УКТЗЕД:</div>
<div class="t" style="top:1054.0px;font-size:16.8px;right:1539px;">Номер:</div>
<div class="t" style="top:1089.0px;font-size:16.8px;right:1539px;">Дата:</div>
<div class="b" style="left:628px;top:1010px;width:193.5px;height:31px;background:#fff;border:1px solid #7a7a7a;box-sizing:border-box;box-shadow:inset 0 0 0 0.5px #a0a0a0;"></div>
<div class="b" style="left:628px;top:1046px;width:193.5px;height:31px;background:#fff;border:1px solid #7a7a7a;box-sizing:border-box;box-shadow:inset 0 0 0 0.5px #a0a0a0;"></div>
<div class="b" style="left:628px;top:1082px;width:193.5px;height:31px;background:#fff;border:1px solid #7a7a7a;box-sizing:border-box;box-shadow:inset 0 0 0 0.5px #a0a0a0;"></div>
<svg class="ab" style="left:800.5px;top:1094.5px" width="14" height="8.0"><path d="M1 1 L7.0 7.0 L13 1" fill="none" stroke="#444" stroke-width="1.3"/></svg>
<div class="b" style="left:850.5px;top:998.5px;width:386.5px;height:125.0px;border:1px solid #dcdcdc;box-sizing:border-box;box-shadow:inset 1px 1px 0 #fff;"></div>
<div class="t" style="top:1019.0px;font-size:16.8px;right:1159.3px;">ШК стикерний:</div>
<div class="t" style="top:1053.0px;font-size:16.8px;right:1162px;">Сертифікат:</div>
<div class="t" style="left:909.5px;top:1089px;font-size:16.8px;width:101px;overflow:hidden">Кількість в упаковці</div>
<div class="b" style="left:1010.5px;top:1010.5px;width:219.0px;height:30.5px;background:#fff;border:1px solid #7a7a7a;box-sizing:border-box;box-shadow:inset 0 0 0 0.5px #a0a0a0;"></div>
<div class="t" style="top:1019.0px;font-size:16px;right:935px;">2060000201737</div>
<div class="b" style="left:1010.5px;top:1046.5px;width:219.0px;height:30.5px;background:#fff;border:1px solid #7a7a7a;box-sizing:border-box;box-shadow:inset 0 0 0 0.5px #a0a0a0;"></div>
<div class="b" style="left:1010.5px;top:1082.5px;width:219.0px;height:30.5px;background:#fff;border:1px solid #7a7a7a;box-sizing:border-box;box-shadow:inset 0 0 0 0.5px #a0a0a0;"></div>
<div class="t" style="top:1145.0px;font-size:16.8px;left:520px;">* без НДС</div>
<div class="b" style="left:1015.5px;top:1136.5px;width:218.0px;height:33.0px;background:#e1e1e1;border:1px solid #adadad;box-sizing:border-box;"></div>
<div class="t" style="top:1145.0px;font-size:16.2px;left:1124.5px;transform:translateX(-50%);">Попередні залишки (F8)</div>
<svg class="ab" style="left:930px;top:175px" width="40" height="45"><path d="M19.2 8 H24.2 V35 H18.5 V15 L13.5 19.3 L11 16 Z" fill="#ff0000" stroke="#fff" stroke-width="6" stroke-linejoin="round" paint-order="stroke" style="filter:drop-shadow(0 1.2px 0.6px rgba(0,0,0,0.55))"/></svg>
<svg class="ab" style="left:939px;top:357px" width="50" height="55"><text x="10" y="40" font-family="Liberation Sans" font-weight="bold" font-size="38" fill="#ff0000" stroke="#fff" stroke-width="6" stroke-linejoin="round" paint-order="stroke" style="filter:drop-shadow(0 1.2px 0.6px rgba(0,0,0,0.55))">2</text></svg>
</body></html>
